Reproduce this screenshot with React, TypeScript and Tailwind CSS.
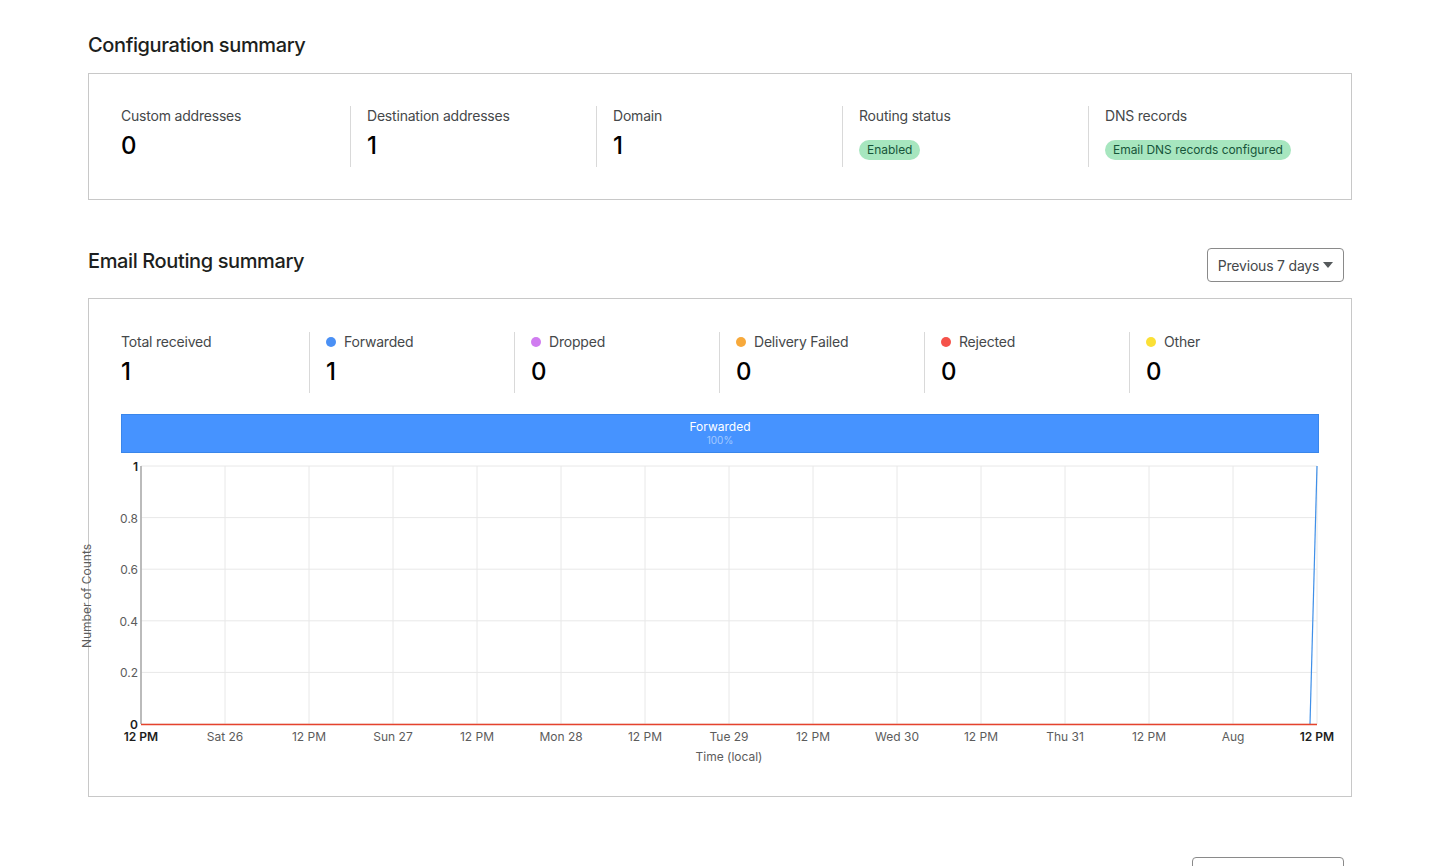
const configStats = [
  { label: 'Custom addresses', value: '0' },
  { label: 'Destination addresses', value: '1' },
  { label: 'Domain', value: '1' },
];

const routingStats = [
  { label: 'Forwarded', value: '1', dot: 'bg-[#4a90f5]' },
  { label: 'Dropped', value: '0', dot: 'bg-[#d07cf0]' },
  { label: 'Delivery Failed', value: '0', dot: 'bg-[#f7a93b]' },
  { label: 'Rejected', value: '0', dot: 'bg-[#f5524a]' },
  { label: 'Other', value: '0', dot: 'bg-[#fbe036]' },
];

const xTicks = ['12 PM', 'Sat 26', '12 PM', 'Sun 27', '12 PM', 'Mon 28', '12 PM', 'Tue 29', '12 PM', 'Wed 30', '12 PM', 'Thu 31', '12 PM', 'Aug', '12 PM'];
const yTicks = [
  { y: 466, label: '1' },
  { y: 517.6, label: '0.8' },
  { y: 569.2, label: '0.6' },
  { y: 620.8, label: '0.4' },
  { y: 672.4, label: '0.2' },
  { y: 724, label: '0' },
];

function Chart() {
  return (
    <svg viewBox="121 460 1198 316" className="block w-[1198px] h-[316px] overflow-visible mt-[7px]">
      {xTicks.map((_, i) => (
        <line key={i} x1={141 + i * 84} x2={141 + i * 84} y1={466} y2={724} stroke="#e8e8e8" strokeWidth={1} />
      ))}
      {yTicks.map((t) => (
        <line key={t.y} x1={141} x2={1317} y1={t.y} y2={t.y} stroke="#e8e8e8" strokeWidth={1} />
      ))}
      <line x1={141} x2={141} y1={466} y2={724} stroke="#a8a8a8" strokeWidth={1.5} />
      <polyline points="1310,724 1317,466" fill="none" stroke="#3f8fe8" strokeWidth={1.2} />
      <line x1={141} x2={1317} y1={724.5} y2={724.5} stroke="#e5432d" strokeWidth={1.5} />
      {yTicks.map((t, i) => {
        const edge = i === 0 || i === yTicks.length - 1;
        return (
          <text key={t.label} x={138} y={t.y + 5} textAnchor="end" fontSize={12} fill={edge ? '#1d1d1d' : '#5c5c5c'} fontWeight={edge ? 600 : 400}>
            {t.label}
          </text>
        );
      })}
      {xTicks.map((label, i) => {
        const edge = i === 0 || i === xTicks.length - 1;
        return (
          <text key={i} x={141 + i * 84} y={741} textAnchor="middle" fontSize={12} fill={edge ? '#1d1d1d' : '#5c5c5c'} fontWeight={edge ? 600 : 400}>
            {label}
          </text>
        );
      })}
      <text x={729} y={761} textAnchor="middle" fontSize={12} fill="#5c5c5c">Time (local)</text>
      <text x={0} y={0} transform="translate(91 596) rotate(-90)" textAnchor="middle" fontSize={12} fill="#5c5c5c">Number of Counts</text>
    </svg>
  );
}

export default function App() {
  return (
    <div className='h-[866px] overflow-hidden bg-white pl-[88px] pr-[86px] pt-[31px] text-[#45484a] font-["Inter",sans-serif]'>
      <h2 className="text-[20px] leading-[28px] font-medium tracking-[-0.38px] text-[#1d1f20] mb-[14px]">Configuration summary</h2>

      <section className="h-[127px] border border-[#c8c8c8] pl-[32px] pt-[32px] flex">
        {configStats.map((s, i) => (
          <div key={s.label} className={i === 0 ? 'w-[229px] h-[61px]' : 'w-[246px] h-[61px] border-l border-[#d9d9d9] pl-[16px]'}>
            <div className="text-[14px] leading-[20px] tracking-[-0.2px]">{s.label}</div>
            <div className="text-[24px] leading-[32px] mt-[4px] font-medium text-black">{s.value}</div>
          </div>
        ))}
        <div className="w-[246px] h-[61px] border-l border-[#d9d9d9] pl-[16px]">
          <div className="text-[14px] leading-[20px] tracking-[-0.2px]">Routing status</div>
          <span className="inline-block mt-[14px] rounded-full bg-[#a7e6bf] px-[8px] text-[12px] leading-[20px] tracking-[-0.03px] text-[#17553a]">Enabled</span>
        </div>
        <div className="h-[61px] border-l border-[#d9d9d9] pl-[16px]">
          <div className="text-[14px] leading-[20px] tracking-[-0.2px]">DNS records</div>
          <span className="inline-block mt-[14px] rounded-full bg-[#a7e6bf] px-[8px] text-[12px] leading-[20px] tracking-[-0.03px] text-[#17553a]">Email DNS records configured</span>
        </div>
      </section>

      <div className="mt-[47px] h-[51px] flex items-start justify-between">
        <h2 className="text-[20px] leading-[28px] font-medium tracking-[-0.38px] text-[#1d1f20]">Email Routing summary</h2>
        <button className="mt-[1px] mr-[8px] w-[137px] h-[34px] rounded-[4px] border border-[#8a8a8a] flex items-center justify-center gap-[4px] text-[14px] tracking-[-0.2px]">
          Previous 7 days
          <svg width="10" height="6" viewBox="0 0 10 6"><path d="M0 0h10L5 6z" fill="#55595b" /></svg>
        </button>
      </div>

      <section className="h-[499px] border border-[#c8c8c8] pl-[32px] pt-[33px]">
        <div className="flex">
          <div className="w-[188px] h-[61px]">
            <div className="text-[14px] leading-[20px] tracking-[-0.2px]">Total received</div>
            <div className="text-[24px] leading-[32px] mt-[4px] font-medium text-black">1</div>
          </div>
          {routingStats.map((s) => (
            <div key={s.label} className="w-[205px] h-[61px] border-l border-[#d9d9d9] pl-[16px]">
              <div className="flex items-center gap-[8px] text-[14px] leading-[20px] tracking-[-0.2px]">
                <span className={'w-[10px] h-[10px] rounded-full ' + s.dot} />
                {s.label}
              </div>
              <div className="text-[24px] leading-[32px] mt-[4px] font-medium text-black">{s.value}</div>
            </div>
          ))}
        </div>

        <div className="mt-[21px] w-[1198px] h-[39px] bg-[#4693ff] border border-[#3a86ea] flex flex-col items-center pt-[4px] text-white">
          <div className="text-[12px] leading-[15px]">Forwarded</div>
          <div className="text-[10px] leading-[12px] text-white/50">100%</div>
        </div>

        <Chart />
      </section>

      <div className="mt-[60px] flex justify-end pr-[8px]">
        <div className="w-[152px] h-[34px] rounded-[4px] border border-[#8a8a8a]" />
      </div>
    </div>
  );
}
